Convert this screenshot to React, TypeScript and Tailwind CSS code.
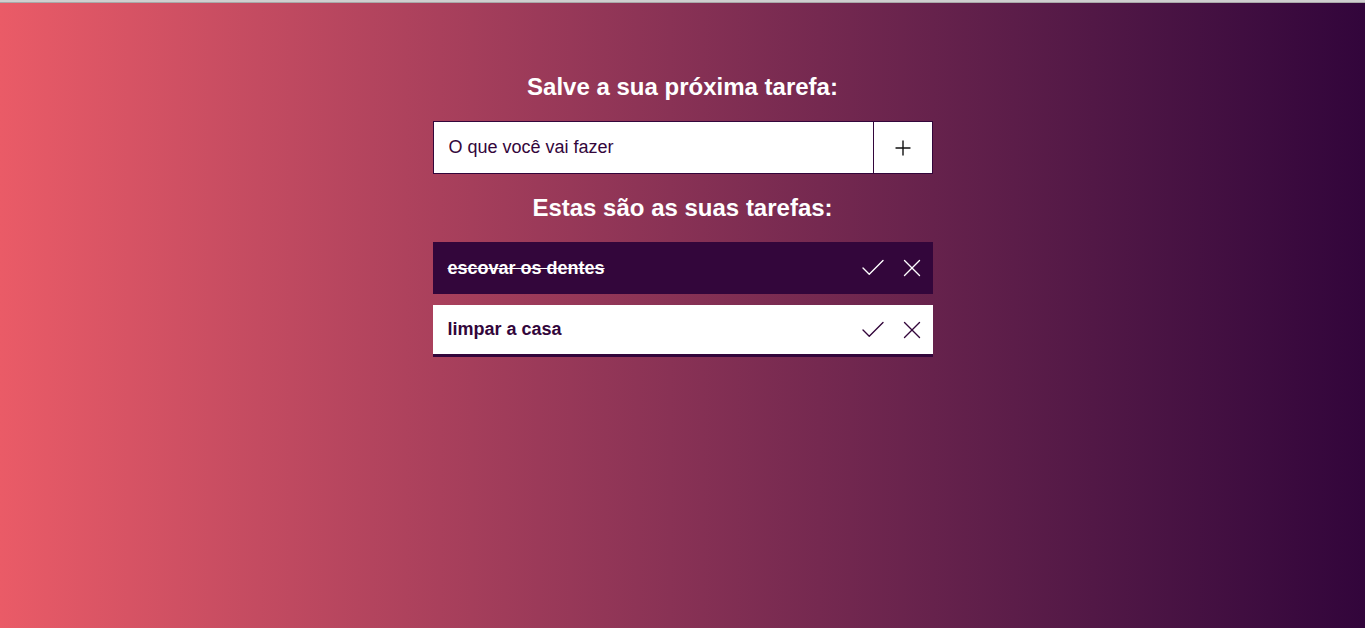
import { Plus, Check, X } from 'lucide-react';

const tasks = [
  { id: 1, text: 'escovar os dentes', done: true },
  { id: 2, text: 'limpar a casa', done: false },
];

export default function App() {
  return (
    <div className="min-h-[628px] flex flex-col font-['Liberation_Sans',Arial,sans-serif]">
      <div className="h-[2px] bg-[#cfcfcf]" />
      <div className="h-px bg-[#a9a9a9]" />
      <main className="flex-1 bg-gradient-to-r from-[#ea5b67] to-[#32053b] flex flex-col items-center pt-[70px]">
        <h1 className="text-[24px] font-bold text-white leading-[28px]">Salve a sua próxima tarefa:</h1>

        <form className="mt-[20px] w-[500px] h-[53px] flex bg-white border border-[#33063b]" onSubmit={(e) => e.preventDefault()}>
          <input
            className="flex-1 px-[15px] text-[18px] text-[#33063b] placeholder:text-[#33063b] outline-none bg-transparent"
            placeholder="O que você vai fazer"
          />
          <button type="submit" className="w-[59px] border-l border-[#33063b] flex items-center justify-center text-[#111]">
            <Plus className="w-[24px] h-[24px]" strokeWidth={1.4} />
          </button>
        </form>

        <h2 className="mt-[20px] text-[24px] font-bold text-white leading-[28px]">Estas são as suas tarefas:</h2>

        <ul className="mt-[20px] w-[500px] flex flex-col gap-[11px]">
          {tasks.map((t) => (
            <li
              key={t.id}
              className={
                t.done
                  ? 'h-[52px] bg-[#33063b] text-white flex items-center pl-[15px] pr-[6px]'
                  : 'h-[52px] bg-white text-[#33063b] border-b-[3px] border-[#33063b] flex items-center pl-[15px] pr-[6px]'
              }
            >
              <span className={t.done ? 'flex-1 text-[18px] font-bold line-through' : 'flex-1 text-[18px] font-bold'}>{t.text}</span>
              <button className="w-[30px] h-[30px] flex items-center justify-center">
                <Check className="w-[32px] h-[32px]" strokeWidth={1.1} />
              </button>
              <button className="ml-[9px] w-[30px] h-[30px] flex items-center justify-center">
                <X className="w-[32px] h-[32px]" strokeWidth={1.1} />
              </button>
            </li>
          ))}
        </ul>
      </main>
    </div>
  );
}
